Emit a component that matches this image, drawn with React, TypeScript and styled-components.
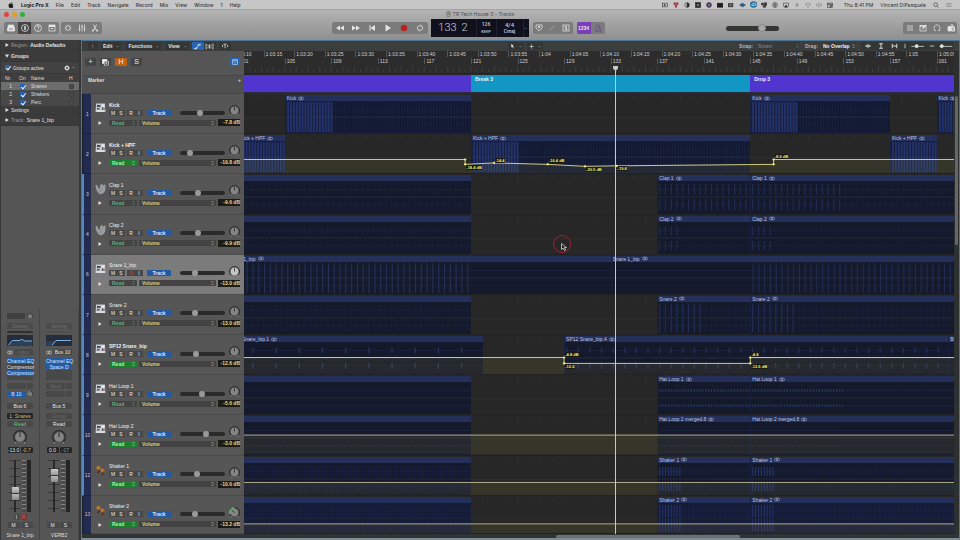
import React from 'react';
import styled, { createGlobalStyle } from 'styled-components';

const FIRST_BAR = 101.5;
const BARS = 61;
const pct = (bar: number) => ((bar - FIRST_BAR) / BARS) * 100;

const GlobalStyle = createGlobalStyle`
  * { box-sizing: border-box; }
  html, body { margin: 0; padding: 0; background: #2b2d2e; }
  body { font-family: "Liberation Sans", Arial, sans-serif; font-size: 5px; line-height: 6px; color: #dedede; overflow: hidden; }
  button, select, input { font: inherit; color: inherit; margin: 0; padding: 0; border: 0; }
  svg { display: block; }
`;

const Shell = styled.div`
  display: flex;
  flex-direction: column;
  height: 100vh;
`;

/* ---------- menu bar ---------- */

const MenuBar = styled.header`
  display: flex;
  align-items: center;
  justify-content: space-between;
  height: 9px;
  flex: none;
  padding: 0 8px;
  background: #c6c6c6;
  color: #303030;
  font-family: Inter, sans-serif;
`;
const MenuItems = styled.nav`
  display: flex;
  align-items: center;
  gap: 7px;
`;
const MenuItem = styled.a<{ $strong?: boolean }>`
  color: ${(p) => (p.$strong ? '#151515' : '#3a3a3a')};
  font-weight: ${(p) => (p.$strong ? 700 : 500)};
  text-decoration: none;
`;
const StatusItems = styled.div`
  display: flex;
  align-items: center;
  gap: 7px;
`;
const StatusIcons = styled.div`
  display: grid;
  grid-auto-flow: column;
  grid-auto-columns: 11px;
  justify-items: center;
  align-items: center;
  margin-right: 1px;
`;

/* ---------- window chrome ---------- */

const Chrome = styled.div`
  flex: none;
  background: linear-gradient(#b3b3b3, #8f8f8f);
  border-top: 1px solid #a2a2a2;
  height: 31px;
`;
const TitleBar = styled.div`
  display: grid;
  grid-template-columns: 1fr auto 1fr;
  align-items: center;
  height: 8px;
  padding: 0 4px;
  color: #4c4c4c;
  font-family: Inter, sans-serif;
`;
const Lights = styled.div`
  display: flex;
  gap: 3px;
`;
const Light = styled.button<{ $color: string }>`
  width: 5px;
  height: 5px;
  border-radius: 50%;
  background: ${(p) => p.$color};
`;
const Title = styled.h1`
  display: flex;
  align-items: center;
  gap: 2px;
  margin: 0;
  font-size: 5px;
  font-weight: 400;
`;
const Toolbar = styled.div`
  display: flex;
  align-items: center;
  height: 20px;
  padding: 0 3px 0 4px;
`;
const Spacer = styled.div<{ $grow: number }>`
  flex: ${(p) => p.$grow} 1 0;
`;
const Group = styled.div<{ $gap?: number }>`
  display: flex;
  height: 12px;
  border-radius: 2px;
  overflow: hidden;
  background: #7b7b7b;
  margin-right: ${(p) => p.$gap ?? 0}px;
`;
const ToolButton = styled.button<{ $w?: number; $bg?: string; $color?: string }>`
  display: flex;
  align-items: center;
  justify-content: center;
  width: ${(p) => p.$w ?? 13}px;
  height: 12px;
  background: ${(p) => p.$bg ?? 'transparent'};
  color: ${(p) => p.$color ?? '#e6e6e6'};
  font-weight: 700;
`;
const Lcd = styled.div`
  display: grid;
  grid-template-columns: 45px 20px 27px 6px;
  height: 18px;
  width: 98px;
  margin: 0 4px 0 3px;
  background: #10111d;
  color: #c4c9e0;
  font-family: Roboto, sans-serif;
  text-align: center;
`;
const LcdBig = styled.div`
  display: flex;
  justify-content: center;
  gap: 5px;
  font-size: 11px;
  font-weight: 300;
  line-height: 17px;
`;
const LcdCell = styled.div`
  display: flex;
  flex-direction: column;
  justify-content: center;
  border-left: 1px solid #202234;
`;
const LcdSmall = styled.span<{ $size: number }>`
  font-size: ${(p) => p.$size}px;
  line-height: 7px;
  font-weight: 500;
`;
const Volume = styled.input`
  appearance: none;
  width: 53px;
  height: 5px;
  border-radius: 3px;
  background: #353735;
  &::-webkit-slider-thumb {
    appearance: none;
    width: 8px;
    height: 8px;
    border-radius: 50%;
    background: #a8a8a8;
    border: 1px solid #8a8a8a;
  }
`;

/* ---------- body ---------- */

const Body = styled.main`
  display: flex;
  flex: 1;
  min-height: 0;
  background: #333739;
`;
const Inspector = styled.aside`
  display: flex;
  flex-direction: column;
  width: 80px;
  flex: none;
  padding: 0 1px;
  background: #363738;
`;
const InspectorRow = styled.div<{ $h?: number; $bg?: string }>`
  display: flex;
  align-items: center;
  gap: 2px;
  height: ${(p) => p.$h ?? 10}px;
  flex: none;
  padding: 0 4px;
  margin-bottom: 1px;
  background: ${(p) => p.$bg ?? '#3b3b3b'};
  color: #e2e2e2;
`;
const Muted = styled.span`
  color: #9b9b9b;
`;
const Push = styled.span`
  margin-left: auto;
`;
const Check = styled.input`
  appearance: none;
  position: relative;
  width: 5px;
  height: 5px;
  flex: none;
  display: block;
  border-radius: 1px;
  background: #4b4b4b;
  border: 1px solid #3e3e3e;
  &:checked {
    border: 0;
    background: #2862ad;
  }
  &:checked::after {
    content: '';
    position: absolute;
    left: 2px;
    top: 0;
    width: 2px;
    height: 4px;
    border-right: 1px solid #e6efff;
    border-bottom: 1px solid #e6efff;
    transform: rotate(40deg);
  }
`;
const GroupLabel = styled.label`
  display: flex;
  align-items: center;
  gap: 3px;
`;
const GroupTable = styled.table`
  border-collapse: collapse;
  table-layout: fixed;
  width: 100%;
  background: #484848;
  th { height: 8px; padding: 0; background: #3f3f3f; font-weight: 400; text-align: left; }
  td { height: 8px; padding: 0; }
  th:first-child { padding-left: 4px; width: 16px; }
  td:first-child { text-align: right; padding-right: 5px; }
  th:nth-child(2) { width: 14px; padding-left: 2px; }
  td:nth-child(2) { padding-left: 3px; }
  th:last-child, td:last-child { width: 10px; }
`;
const GroupTr = styled.tr<{ $on?: boolean }>`
  background: ${(p) => (p.$on ? '#6d6d6d' : 'transparent')};
`;
const InspectorFill = styled.div`
  flex: 1;
  background: #555;
`;
const Strips = styled.div`
  display: grid;
  grid-template-columns: 1fr 1fr;
  flex: none;
  background: #555;
`;
const StripBox = styled.section`
  display: grid;
  grid-template-rows: 11px 9px 3px 14px 10px 24px 18px 13px 8px 8px 18px 8px 59px 8px 8px 11px;
  align-items: center;
  justify-items: center;
  border-right: 1px solid #464646;
`;
const Slot = styled.button<{ $bg?: string; $fg?: string; $w?: number; $h?: number }>`
  display: block;
  width: ${(p) => p.$w ?? 26}px;
  height: ${(p) => p.$h ?? 6}px;
  line-height: 6px;
  border-radius: 1px;
  text-align: center;
  white-space: nowrap;
  background: ${(p) => p.$bg ?? '#484848'};
  color: ${(p) => p.$fg ?? '#e4e4e4'};
`;
const StripLine = styled.div<{ $gap?: number }>`
  display: flex;
  align-items: center;
  gap: ${(p) => p.$gap ?? 1}px;
`;
const Stack = styled.div<{ $h: number; $bg?: string }>`
  display: flex;
  flex-direction: column;
  gap: ${(p) => (p.$bg ? 0 : 2)}px;
  height: ${(p) => p.$h}px;
  background: ${(p) => p.$bg ?? 'transparent'};
`;
const FaderRow = styled.div`
  display: flex;
  align-items: center;
  align-self: end;
  gap: 1px;
  height: 54px;
`;
const Fader = styled.input`
  appearance: none;
  writing-mode: vertical-lr;
  direction: rtl;
  width: 12px;
  height: 52px;
  background: linear-gradient(90deg, transparent 5px, #292929 5px, #292929 7px, transparent 7px),
    repeating-linear-gradient(#3a3a3a 0 1px, transparent 1px 8px);
  &::-webkit-slider-thumb {
    appearance: none;
    width: 7px;
    height: 13px;
    border-radius: 1px;
    background: linear-gradient(#cfcfcf, #9a9a9a 45%, #333 46%, #333 52%, #b8b8b8 54%, #8a8a8a);
  }
`;
const Meter = styled.div`
  width: 4px;
  height: 52px;
  background: #262626;
`;
const Scale = styled.div`
  width: 4px;
  height: 52px;
  background: repeating-linear-gradient(#888 0 1px, #4a4a4a 1px 4px);
`;

/* ---------- arrange area ---------- */

const Arrange = styled.section`
  display: flex;
  flex-direction: column;
  flex: 1;
  min-width: 0;
  margin-left: 1px;
  border: 1px solid #4d7593;
  border-bottom: 2px solid #7c8d96;
  background: #313434;
`;
const ArrangeBar = styled.div`
  display: flex;
  align-items: center;
  height: 10px;
  flex: none;
  padding: 0 5px 0 6px;
  background: #3c3d3d;
`;
const BarMenu = styled.button<{ $mr?: number }>`
  display: flex;
  align-items: center;
  gap: 4px;
  padding: 0 2px;
  height: 8px;
  margin-right: ${(p) => p.$mr ?? 5}px;
  background: #343535;
  color: #e0e0e0;
  font-weight: 700;
`;
const BarIcon = styled.button<{ $on?: boolean; $w?: number }>`
  display: flex;
  align-items: center;
  justify-content: center;
  width: ${(p) => p.$w ?? 11}px;
  height: 8px;
  border-radius: 1px;
  background: ${(p) => (p.$on ? '#2766b6' : '#343535')};
  color: #e2e2e2;
`;
const BarField = styled.label<{ $dim?: boolean; $w: number }>`
  display: flex;
  align-items: center;
  gap: 5px;
  color: ${(p) => (p.$dim ? '#777' : '#c4c4c4')};
  font-weight: 700;
  margin-right: 5px;
  span { color: #b4b4b4; }
  select { appearance: none; width: ${(p) => p.$w}px; height: 8px; margin-right: -10px; background: #383939; color: ${(p) => (p.$dim ? '#777' : '#eee')}; }
`;
const Scroller = styled.div`
  display: flex;
  flex: 1;
  min-height: 0;
`;
const Board = styled.div`
  position: relative;
  display: grid;
  flex: 1;
  min-width: 0;
  overflow: hidden;
  grid-template-columns: 162px minmax(0, 1fr);
  grid-template-rows: 24px 19px repeat(10, minmax(0, 40fr)) minmax(0, 38fr);
`;
const BoardTools = styled.div`
  display: flex;
  align-items: center;
  gap: 4px;
  padding: 0 4px 2px 3px;
  background: #555;
`;
const SquareButton = styled.button<{ $bg?: string; $w?: number }>`
  display: flex;
  align-items: center;
  justify-content: center;
  width: ${(p) => p.$w ?? 11}px;
  height: 8px;
  border-radius: 1px;
  background: ${(p) => p.$bg ?? '#444'};
  color: #f0f0f0;
  font-size: 7px;
`;
const MarkerHead = styled.div`
  display: flex;
  justify-content: space-between;
  padding: 1px 3px 0 6px;
  background: #505050;
  border-bottom: 1px solid #454545;
  border-top: 1px solid #484848;
  font-weight: 700;
`;
const Ruler = styled.div`
  position: relative;
  overflow: hidden;
  background: #2c2c2c;
  border-bottom: 2px solid #262626;
`;
const RulerText = styled.span<{ $at: number; $top: number }>`
  position: absolute;
  left: ${(p) => p.$at}%;
  top: ${(p) => p.$top}px;
  padding-left: 1px;
  border-left: 1px solid #555;
  white-space: nowrap;
  color: #cfcfcf;
`;
const Fill = styled.svg`
  position: absolute;
  inset: 0;
  width: 100%;
  height: 100%;
`;
const MarkerLane = styled.div`
  display: grid;
  grid-template-columns: 195fr 240fr 175fr;
  background: #292a3a;
  padding-bottom: 2px;
`;
const MarkerBlock = styled.div<{ $bg: string }>`
  background: ${(p) => p.$bg};
  color: #f0f0f4;
  font-weight: 700;
  padding: 1px 4px;
`;

/* ---------- track header ---------- */

const TrackHead = styled.div<{ $selected?: boolean }>`
  display: grid;
  grid-template-columns: 9px 17px minmax(0, 1fr);
  min-height: 0;
  background: ${(p) => (p.$selected ? '#7b7b7b' : '#565656')};
  border-bottom: 1px solid #4b4b4b;
`;
const Num = styled.div<{ $lit: boolean }>`
  display: flex;
  align-items: center;
  justify-content: center;
  background: #232c50;
  border-left: 2px solid ${(p) => (p.$lit ? '#5487bd' : '#1c2438')};
  margin-bottom: -1px;
  border-bottom: 1px solid #1b2342;
  color: #c2c8dc;
`;
const IconCol = styled.div`
  display: flex;
  flex-direction: column;
  align-items: center;
  justify-content: space-between;
  height: 31px;
  padding: 9px 0 0 1px;
`;
const Fields = styled.div`
  display: grid;
  grid-template-rows: 7px 9px 11px;
  align-items: center;
  padding: 7px 4px 0 1px;
  align-content: start;
`;
const Name = styled.span<{ $bold?: boolean }>`
  color: #efefef;
  white-space: nowrap;
  font-weight: ${(p) => (p.$bold ? 700 : 400)};
`;
const Line = styled.div`
  display: flex;
  align-items: center;
`;
const Mini = styled.button<{ $mr?: number; $color?: string }>`
  width: 8px;
  height: 6px;
  line-height: 6px;
  margin-right: ${(p) => p.$mr ?? 0}px;
  background: #474747;
  color: ${(p) => p.$color ?? '#ececec'};
  text-align: center;
`;
const TrackButton = styled.button`
  width: 24px;
  height: 6px;
  line-height: 6px;
  margin: 0 9px 0 4px;
  border-radius: 1px;
  background: #2359a0;
  color: #d8e6ff;
  font-weight: 700;
  text-align: center;
`;
const HSlider = styled.input`
  appearance: none;
  width: 45px;
  height: 4px;
  border-radius: 2px;
  background: #2a2a2a;
  &::-webkit-slider-thumb {
    appearance: none;
    width: 6px;
    height: 6px;
    border-radius: 50%;
    background: #9a9a9a;
  }
`;
const KnobSpot = styled.div`
  width: 11px;
  height: 11px;
  margin: -5px 0 -1px auto;
`;
const Picker = styled.div<{ $w?: number; $tone: 'on' | 'off' | 'param' }>`
  position: relative;
  width: ${(p) => (p.$w ? `${p.$w}px` : 'auto')};
  flex: ${(p) => (p.$w ? 'none' : 1)};
  margin-right: 2px;
  color: ${(p) => (p.$tone === 'on' ? '#a8f0b0' : p.$tone === 'off' ? '#63a878' : '#d9cc86')};
  select {
    appearance: none;
    display: block;
    width: 100%;
    height: 6px;
    line-height: 6px;
    padding: 0 3px;
    border-radius: 1px;
    font-weight: 700;
    background: ${(p) => (p.$tone === 'on' ? '#1c8030' : '#434343')};
  }
  svg { position: absolute; right: 1px; top: 0; pointer-events: none; }
`;
const Db = styled.output`
  width: 22px;
  height: 7px;
  line-height: 7px;
  background: #1d1d18;
  color: #e2da90;
  font-weight: 700;
  text-align: right;
  white-space: nowrap;
`;

/* ---------- lanes ---------- */

const Lane = styled.div`
  position: relative;
  overflow: hidden;
  min-height: 0;
  background: #272727;
  border-bottom: 1px solid #212121;
`;
const RegionBox = styled.div<{ $from: number; $to: number; $body: string }>`
  position: absolute;
  top: 1px;
  bottom: 0;
  left: ${(p) => pct(p.$from)}%;
  width: ${(p) => pct(p.$to) - pct(p.$from)}%;
  display: flex;
  flex-direction: column;
  overflow: hidden;
  background: ${(p) => p.$body};
  border-left: 1px solid #1a2140;
`;
const RegionTitle = styled.div`
  display: flex;
  align-items: center;
  gap: 2px;
  height: 6px;
  flex: none;
  padding-left: 1px;
  background: #25305a;
  color: #bcc6e4;
  white-space: nowrap;
`;
const WaveSvg = styled.svg`
  flex: 1;
  min-height: 0;
  width: 100%;
`;
const PointLabel = styled.span<{ $at: number; $top: number }>`
  position: absolute;
  left: ${(p) => p.$at}%;
  top: ${(p) => p.$top}%;
  height: 5px;
  line-height: 5px;
  background: #1a1a14;
  color: #f4ec70;
  font-size: 4px;
  font-weight: 700;
  white-space: nowrap;
`;
const Overlay = styled.div`
  position: absolute;
  top: 0;
  bottom: 0;
  left: 162px;
  right: 0;
  pointer-events: none;
`;
const Playhead = styled.div`
  position: absolute;
  top: 15px;
  bottom: 0;
  left: ${pct(133.4)}%;
  width: 1px;
  background: #c8c8c8;
  svg { margin-left: -2px; }
`;
const Pointer = styled.div`
  position: absolute;
  left: ${pct(128)}%;
  top: 38%;
`;
const VScroll = styled.div`
  width: 5px;
  flex: none;
  padding: 45px 1px 0;
  background: #2d3030;
`;
const VThumb = styled.div`
  height: 34%;
  border-radius: 2px;
  background: #666;
`;
const HScroll = styled.div`
  display: grid;
  grid-template-columns: 474fr 184fr 219fr;
  align-items: center;
  height: 4px;
  flex: none;
`;
const HThumb = styled.div`
  grid-column: 2;
  height: 3px;
  border-radius: 2px;
  background: #6d7072;
`;

/* ---------- drawings ---------- */

const Draw = ({ w = 8, h = 8, box = '0 0 16 16', children }: { w?: number; h?: number; box?: string; children: React.ReactNode }) => (
  <svg width={w} height={h} viewBox={box} fill="none" stroke="currentColor" strokeWidth={1.5} aria-hidden="true">
    {children}
  </svg>
);
const Chev = () => <Draw w={3} h={3}><path d="M2 5l6 6 6-6" strokeWidth={3} opacity={0.6} /></Draw>;
const UpDown = () => <Draw w={5} h={6}><path d="M5 6l3-4 3 4M5 10l3 4 3-4" strokeWidth={1.8} /></Draw>;
const Tri = ({ down }: { down?: boolean }) => (
  <Draw w={4} h={4}><path d={down ? 'M0 2h16L8 15z' : 'M2 0v16L15 8z'} fill="currentColor" stroke="none" /></Draw>
);
const Stereo = () => (
  <Draw w={6} h={5} box="0 0 18 14"><circle cx="6" cy="7" r="4.5" /><circle cx="12" cy="7" r="4.5" /></Draw>
);
const Knob = ({ size = 11, lit, green }: { size?: number; lit?: boolean; green?: boolean }) => (
  <svg width={size} height={size} viewBox="0 0 22 22" aria-hidden="true">
    <path d="M5 19A10 10 0 1 1 17 19" fill="none" stroke="#2a2a2a" strokeWidth={2} />
    {green && <path d="M2 14A10 10 0 0 1 11 1.500" fill="none" stroke="#62c27c" strokeWidth={3} />}
    <circle cx="11" cy="11" r="7.500" fill={lit ? '#c4c4c4' : '#858585'} />
    <path d={green ? 'M11 11L5 6' : 'M11 11V4'} stroke="#262626" strokeWidth={1.5} />
    <circle cx="4" cy="20" r="1" fill="#aaa" /><circle cx="18" cy="20" r="1" fill="#aaa" />
  </svg>
);
const Apple = () => (
  <svg width={6} height={6} viewBox="0 0 16 16" aria-hidden="true">
    <path fill="#1c1c1c" d="M11 0c0 2-1.500 3.500-3 3.500C8 1.800 9.500.3 11 0zM8 4.600c1 0 1.700-.8 3-.8 1.200 0 2.300.6 3 1.600-2.600 1.600-2.100 5 .5 6C13.700 13.500 12.500 16 11 16c-1.100 0-1.500-.7-2.800-.7S6.500 16 5.400 16C3.500 16 1.500 12.300 1.500 9.200c0-3.200 2-5 3.900-5 1.100 0 1.900.4 2.600.4z" />
  </svg>
);
const DrumMachine = () => (
  <svg width={11} height={10} viewBox="0 0 22 20" aria-hidden="true">
    <path d="M2 1h18v4l1 13H1L2 5z" fill="#c3c7cc" /><rect x="4" y="4" width="7" height="4" fill="#3f5668" />
    <rect x="13" y="3" width="6" height="4" fill="#eceef0" /><path d="M4 10h5v3H4zM14 9h2v5h-2z" fill="#4a5056" />
    <path d="M17 9h2v5h-2z" fill="#8c4a44" /><path d="M3 15h16v2H3z" fill="#f2f2f2" />
  </svg>
);
const Clap = () => (
  <svg width={11} height={12} viewBox="0 0 22 24" aria-hidden="true">
    <path d="M1 6q0-3 3-2l4 8q2-1 2-5 0-5 4-5 2 1 2 4 4-5 5-1 1 9-3 14-4 5-9 3Q3 18 1 6z" fill="#9b9fa1" />
    <path d="M10 9q0 6-1 10M15 6q0 6-4 13" stroke="#7b8082" strokeWidth={1} fill="none" />
  </svg>
);
const Shaker = () => (
  <svg width={11} height={11} viewBox="0 0 22 22" aria-hidden="true">
    <circle cx="7" cy="6" r="4" fill="#c67a26" /><circle cx="15" cy="11" r="4" fill="#b5641a" />
    <path d="M9 9l-3 8M16 15l-1 6" stroke="#4a2c12" strokeWidth={2.5} /><circle cx="14" cy="10" r="1.500" fill="#e8a85a" />
  </svg>
);

const statusShapes: React.ReactNode[] = [
  <><rect x="1" y="3" width="14" height="10" /><path d="M6 6l4 2-4 2z" fill="currentColor" /></>,
  <><path d="M2 2l5 5M7 2L2 7M9 2l5 5M14 2L9 7M5 9l6 5M11 9l-6 5" stroke="#9b2530" strokeWidth={3} /></>,
  <><circle cx="8" cy="8" r="6" /><path d="M8 2a6 6 0 0 1 0 12z" fill="currentColor" /></>,
  <><rect x="1" y="1" width="14" height="14" fill="#2a2a2a" /><circle cx="8" cy="8" r="3" fill="#ccc" /></>,
  <><circle cx="8" cy="8" r="6.500" fill="#5a3a86" /><circle cx="8" cy="8" r="2.500" fill="#ddd" /></>,
  <rect x="0" y="3" width="16" height="11" fill="#1d1d1d" />,
  <><rect x="1" y="4" width="12" height="9" fill="currentColor" /><path d="M4 7h6M4 10h6" stroke="#ccc" /></>,
  <><path d="M0 8l8-5 8 5-8 5z" fill="#355c92" stroke="#355c92" strokeWidth={2} /></>,
  <><ellipse cx="8" cy="8" rx="8" ry="7.500" fill="#1c6f9c" stroke="none" /><path d="M4 10h8a2 2 0 0 0-1-4 3 3 0 0 0-5 1 2 2 0 0 0-2 3z" stroke="#fff" /></>,
  <path d="M1 3h6v5H1zM9 2h6v7H9zM6 10h6v4H6z" fill="currentColor" />,
  <><circle cx="8" cy="8" r="6.500" /><path d="M8 2v12M4 6l4 4 4-4" strokeWidth={2} /></>,
  <><path d="M3 11H1V3h14v8h-2" /><path d="M8 8l4 6H4z" fill="currentColor" /></>,
  <path d="M8 2v12M3 8h10" opacity={0.6} />,
  <path d="M1 6q7-6 14 0l-7 8z" opacity={0.6} />,
  <path d="M1 6h3l4-4v12l-4-4H1zM11 5q2 3 0 6M14 3q3 5 0 10" opacity={0.45} />,
  <><rect x="1" y="3" width="14" height="11" /><path d="M1 6h14M8 9h4v3H8z" strokeWidth={2} /></>,
];

/* ---------- data ---------- */

type WaveLayer = { from: number; to: number; step: number; w: number; amp: number; color: string };
type Region = { name?: string; from: number; to: number; body?: string; layers?: WaveLayer[] };
type Track = {
  n: number; name: string; icon: 'drum' | 'clap' | 'shaker'; vol: number; db: string; on?: boolean; bold?: boolean; selected?: boolean; green?: boolean;
  regions: Region[]; line?: [number, number][]; labels?: [number, number, string][]; nodes?: boolean;
};

const DARK = '#141a2b';
const BLUE = '#171e3a';
const END = 163;

const beats = (from: number, to: number, hot: number): WaveLayer[] => [
  { from, to: hot, step: 0.25, w: 0.16, amp: 16, color: '#23326a' },
  { from: hot, to, step: 0.25, w: 0.1, amp: 16, color: '#12182f' },
];
const hits = (from: number, to: number, step: number, amp: number, color: string): WaveLayer => ({ from, to, step, w: 0.1, amp, color });
const kick = (name: string, from: number, to: number, hot: number): Region => ({ name, from, to, body: BLUE, layers: beats(from, to, hot) });

const tail = (name: string, make: (a: number, b: number, first: boolean) => WaveLayer[], body = DARK): Region[] => [
  { from: 85, to: 121, body, layers: make(101, 121, true) },
  { name, from: 137, to: 145, body, layers: make(137, 145, false) },
  { name, from: 145, to: END, body, layers: make(145, END, false) },
];

const tracks: Track[] = [
  { n: 1, name: 'Kick', icon: 'drum', vol: 44, db: '-7.8 dB', bold: true, regions: [kick('Kick', 105, 121, 109), kick('Kick', 145, 157, 149), kick('Kick', 161, END, 163)] },
  {
    n: 2, name: 'Kick + HPF', icon: 'drum', vol: 19, db: '-19.8 dB', on: true, bold: true, nodes: true,
    regions: [kick('Kick + HPF', 101, 105, 105), kick('Kick + HPF', 121, 145, 125), kick('Kick + HPF', 157, 161, 161)],
    line: [[101, 26], [120.5, 26], [120.5, 31], [123, 29.5], [127.6, 31], [130.8, 33], [133.5, 32.5], [147, 31], [147, 26], [163, 26]],
    labels: [[120.6, 78, '-18.4 dB'], [123.1, 60, '-14.4'], [127.7, 62, '-16.4 dB'], [130.9, 84, '-20.5 dB'], [133.6, 82, '-19.8'], [147.1, 50, '-8.0 dB']],
  },
  { n: 3, name: 'Clap 1', icon: 'clap', vol: 39, db: '-9.6 dB', regions: tail('Clap 1', (a, b, f) => f ? [hits(a, b, 0.5, 10, '#192036')] : [hits(a, b, 0.5, 10, '#191f3a'), hits(a, Math.min(b, a + 8), 0.5, 12, '#212b50')]) },
  { n: 4, name: 'Clap 2', icon: 'clap', vol: 38, db: '-9.9 dB', regions: tail('Clap 2', (a, b, f) => f ? [hits(a, b, 0.5, 8, '#191f34')] : [hits(a, b, 0.5, 9, '#181e32'), hits(a, a + 2, 0.5, 10, '#222c50')]) },
  {
    n: 6, name: 'Snare 1_bip', icon: 'drum', vol: 32, db: '-13.0 dB', selected: true,
    regions: [
      { name: 'Snare 1_bip', from: 100, to: 133, body: DARK, layers: [hits(101, 121, 0.5, 16, '#242f56')] },
      { name: 'Snare 1_bip', from: 133, to: END, body: DARK, layers: [hits(145, END, 0.5, 16, '#202a50')] },
    ],
  },
  { n: 7, name: 'Snare 2', icon: 'drum', vol: 32, db: '-13.0 dB', regions: tail('Snare 2', (a, b, f) => f ? [hits(a, b, 0.5, 12, '#181f38')] : [hits(a, b, 0.5, 14, '#181f38'), hits(a, a + 4, 0.5, 15, '#222d56')]) },
  {
    n: 8, name: 'SP12 Snare_bip', icon: 'drum', vol: 33, db: '-12.6 dB', on: true, bold: true, nodes: true,
    regions: [
      { name: 'SP12 Snare_bip.1', from: 100, to: 122, body: DARK, layers: [hits(102, 122, 2, 6, '#2b3760')] },
      { name: 'SP12 Snare_bip.4', from: 129, to: 162, body: DARK, layers: [hits(129, 162, 1, 6, '#26315a')] },
      { name: 'Bip', from: 162, to: END },
    ],
    line: [[101, 23], [129, 23], [129, 29], [145, 29], [145, 23], [163, 23]],
    labels: [[129.1, 42, '-4.8 dB'], [129.1, 74, '-12.6'], [145.1, 42, '-4.8'], [145.1, 74, '-12.6 dB']],
  },
  { n: 9, name: 'Hat Loop 1', icon: 'drum', vol: 49, db: '-5.6 dB', regions: tail('Hat Loop 1', (a, b, f) => f ? [hits(a, b, 0.25, 4, '#191f38')] : [hits(a, b, 0.25, 2, '#1a2240'), hits(a, a + 8, 0.25, 3, '#26335a')]) },
  { n: 10, name: 'Hat Loop 2', icon: 'drum', vol: 60, db: '-3.0 dB', on: true, regions: tail('Hat Loop 2 merged.8', (a, b, f) => [hits(a, f ? b : a + 8, 0.5, 1, '#202a49')]), line: [[101, 20.5], [163, 20.5]] },
  { n: 12, name: 'Shaker 1', icon: 'shaker', vol: 37, db: '-10.6 dB', on: true, regions: tail('Shaker 1', (a, b, f) => f ? [hits(a, b, 0.25, 12, '#181f44')] : [hits(a, b, 0.25, 10, '#181f3c'), hits(a, a + 2, 0.25, 9, '#26346a')]), line: [[101, 27], [163, 27]] },
  { n: 13, name: 'Shaker 2', icon: 'shaker', vol: 31, db: '-13.2 dB', on: true, green: true, regions: tail('Shaker 2', (a, b, f) => f ? [hits(a, b, 0.25, 15, '#192044')] : [hits(a, b, 0.25, 14, '#192044'), hits(a, a + 2, 0.25, 14, '#243164')], '#151b34'), line: [[101, 30], [163, 30]] },
];

/* ---------- pieces ---------- */

const Wave = ({ region }: { region: Region }) => {
  const span = region.to - region.from;
  return (
    <WaveSvg viewBox={`0 0 ${span} 34`} preserveAspectRatio="none" aria-hidden="true">
      <path d={`M0 9H${span}M0 25H${span}`} stroke="#222c4e" strokeWidth={1} opacity={0.45} />
      {(region.layers ?? []).map((l, i) => {
        let d = '';
        for (let b = l.from + 0.1; b < l.to; b += l.step) {
          const x = b - region.from;
          const a = Math.min(l.amp, 16) / 2;
          d += `M${x} ${9 - a}h${l.w}v${a * 2}h-${l.w}zM${x} ${25 - a}h${l.w}v${a * 2}h-${l.w}z`;
        }
        return <path key={i} d={d} fill={l.color} />;
      })}
      <path d={`M0 17H${span}`} stroke="#313a50" strokeWidth={1} opacity={0.5} />
    </WaveSvg>
  );
};

const LaneTicks = () => {
  let d = '';
  for (let b = 102; b < 163; b += 1) d += `M${b - FIRST_BAR} 2V7`;
  return (
    <Fill viewBox={`0 0 ${BARS} 40`} preserveAspectRatio="none" aria-hidden="true">
      <path d={d} stroke="#343434" strokeWidth={0.08} />
      <path d={`M0 24H${BARS}`} stroke="#2d2d2d" strokeWidth={1} />
    </Fill>
  );
};

const Automation = ({ line, nodes }: { line: [number, number][]; nodes?: boolean }) => {
  const pts = line.map(([b, y]) => `${(b - FIRST_BAR) * 10},${y}`);
  return (
    <Fill viewBox={`0 0 ${BARS * 10} 40`} preserveAspectRatio="none" aria-hidden="true">
      <polygon points={`0,40 ${pts.join(' ')} ${BARS * 10},40`} fill="#d8c850" opacity={0.09} />
      <polyline points={pts.join(' ')} fill="none" stroke={nodes ? '#d0ca80' : '#b0ae90'} strokeWidth={1} vectorEffect="non-scaling-stroke" />
      {nodes && line.slice(1, -1).map(([b, y]) => <circle key={`${b}-${y}`} cx={(b - FIRST_BAR) * 10} cy={y} r={1.1} fill="#f6ee84" />)}
    </Fill>
  );
};

const TrackRow = ({ t, lit }: { t: Track; lit: boolean }) => (
  <>
    <TrackHead $selected={t.selected}>
      <Num $lit={lit}>{t.n}</Num>
      <IconCol>
        {t.icon === 'drum' ? <DrumMachine /> : t.icon === 'clap' ? <Clap /> : <Shaker />}
        <Tri />
      </IconCol>
      <Fields>
        <Name $bold={t.bold}>{t.name}</Name>
        <Line>
          <Mini>M</Mini><Mini $mr={2}>S</Mini><Mini $color={t.selected ? '#c23a3a' : undefined}>R</Mini><Mini>I</Mini>
          <TrackButton>Track</TrackButton>
          <HSlider type="range" aria-label={`${t.name} level`} defaultValue={t.vol} />
          <KnobSpot><Knob lit={t.selected} green={t.green} /></KnobSpot>
        </Line>
        <Line>
          <Picker $w={28} $tone={t.on ? 'on' : 'off'}>
            <select aria-label={`${t.name} automation mode`}><option>Read</option></select><UpDown />
          </Picker>
          <Picker $tone="param">
            <select aria-label={`${t.name} automation parameter`}><option>Volume</option></select><UpDown />
          </Picker>
          <Db>{t.db}</Db>
        </Line>
      </Fields>
    </TrackHead>
    <Lane>
      <LaneTicks />
      {t.regions.map((r) => (
        <RegionBox key={r.from} $from={r.from} $to={r.to} $body={r.body ?? DARK}>
          <RegionTitle>{r.name && <>{r.name} <Stereo /></>}</RegionTitle>
          <Wave region={r} />
        </RegionBox>
      ))}
      {t.line && <Automation line={t.line} nodes={t.nodes} />}
      {(t.labels ?? []).map(([b, y, text]) => <PointLabel key={`${b}${text}`} $at={pct(b)} $top={y}>{text}</PointLabel>)}
    </Lane>
  </>
);

type StripProps = { first?: boolean; input: string; inserts: [string, boolean][]; send?: string; out: string; group?: string; peak: [string, string]; level: number; name: string };
const Strip = ({ first, input, inserts, send, out, group, peak, level, name }: StripProps) => (
  <StripBox>
    {first ? <StripLine $gap={2}><Slot $w={18} $bg="#3f3f3f" aria-label="Gain" /><Knob size={6} /></StripLine> : <span />}
    <Slot $bg="#4b4b4b" $fg="#6f6f6f">Setting</Slot>
    <Slot $h={2} $bg={first ? '#303030' : '#505050'} aria-label="Gain reduction" />
    <svg width={26} height={11} viewBox="0 0 52 22" role="img" aria-label="Equalizer curve">
      <rect width="52" height="22" fill="#262d3a" />
      <path d={first ? 'M3 20L10 12H50V22H3z' : 'M0 12H20L14 22H0z'} fill="#2d4668" opacity={0.7} />
      <path d={first ? 'M3 20L11 11H24L30 9L36 12H50' : 'M12 20L20 11H50'} fill="none" stroke="#83b3dc" strokeWidth={2} />
    </svg>
    <StripLine><Stereo /><Slot $w={19} $fg={first ? '#6f6f6f' : '#e4e4e4'}>{input}</Slot></StripLine>
    <Stack $h={22} $bg="#484848">
      {inserts.map(([label, on], i) => <Slot key={i} $bg={on ? '#225ba6' : '#404040'} $fg={on ? '#d6e6ff' : '#e4e4e4'}>{label}</Slot>)}
    </Stack>
    <Stack $h={14}>
      <StripLine><Slot $w={19} $fg="#6c6c6c">{first ? '' : 'Send'}</Slot><Slot $w={6} aria-label="Send level" /></StripLine>
      <StripLine>
        <Slot $w={19} $bg={send ? '#225ba6' : '#484848'}>{send}</Slot>
        {send ? <Knob size={6} green /> : <Slot $w={6} aria-label="Send level" />}
      </StripLine>
    </Stack>
    <Slot>{out}</Slot>
    <Slot $bg={group ? '#262626' : '#484848'} $fg={group ? '#d2ba72' : '#686868'}>{group ?? 'Group'}</Slot>
    <Slot $fg={first ? '#65c47c' : '#e4e4e4'}>Read</Slot>
    <Knob size={14} />
    <StripLine><Slot $w={12} $bg="#262626">{peak[0]}</Slot><Slot $w={12} $bg="#262626" $fg={first ? '#d2ba72' : '#8d948d'}>{peak[1]}</Slot></StripLine>
    <FaderRow><Fader type="range" aria-label={`${name} fader`} defaultValue={level} /><Scale /><Meter /></FaderRow>
    {first ? <StripLine><Slot $w={6}>I</Slot><Slot $w={6} $bg="#7a3434" $fg="#e05a5a">R</Slot></StripLine> : <span />}
    <StripLine><Slot $w={12}>M</Slot><Slot $w={12}>S</Slot></StripLine>
    <span>{name}</span>
  </StripBox>
);

const times: string[] = [];
for (let i = 0; i < 24; i += 1) {
  const s = 10 + i * 5;
  const sec = s % 60;
  times.push(`1:0${3 + Math.floor(s / 60)}${sec ? `:${String(sec).padStart(2, '0')}` : ''}`);
}
const barNumbers = Array.from({ length: 16 }, (_, i) => 101 + i * 4);

const rulerTicks = () => {
  let d = '';
  for (let b = 102; b < 163; b += 0.5) {
    const x = b - FIRST_BAR;
    d += `M${x} ${b % 1 ? 18 : 15}V21`;
  }
  return d;
};

export default function App() {
  return (
    <Shell>
      <GlobalStyle />
      <MenuBar>
        <MenuItems>
          <Apple />
          <MenuItem href="#" $strong>Logic Pro X</MenuItem>
          {['File', 'Edit', 'Track', 'Navigate', 'Record', 'Mix', 'View', 'Window', '1', 'Help'].map((m) => <MenuItem key={m} href="#">{m}</MenuItem>)}
        </MenuItems>
        <StatusItems>
          <StatusIcons>{statusShapes.map((s, i) => <Draw key={i} w={i === 8 || i === 7 ? 9 : 6} h={i === 8 ? 7 : 6}>{s}</Draw>)}</StatusIcons>
          <span>Thu 8:41 PM</span>
          <span>Vincent DiPasquale</span>
          <Draw w={6} h={6}><circle cx="7" cy="7" r="5" /><path d="M11 11l4 4" /></Draw>
          <Draw w={6} h={6}><path d="M1 4h14M1 8h14M1 12h14" opacity={0.5} /></Draw>
        </StatusItems>
      </MenuBar>

      <Chrome>
        <TitleBar>
          <Lights>
            <Light $color="#e0443e" aria-label="Close" /><Light $color="#dea02c" aria-label="Minimize" /><Light $color="#2fae3c" aria-label="Zoom" />
          </Lights>
          <Title><Draw w={5} h={6}><rect x="3" y="1" width="10" height="14" /><path d="M5 5h6M5 9h6" strokeWidth={2} /></Draw>TR Tech House 3 - Tracks</Title>
        </TitleBar>
        <Toolbar>
          <Group $gap={2}>
            <ToolButton $w={14} aria-label="Library"><Draw><path d="M3 2h10l2 8v4H1v-4z" fill="currentColor" /><path d="M4 10h8" stroke="#666" /></Draw></ToolButton>
            <ToolButton $w={13} $bg="#454545" aria-label="Inspector"><Draw><circle cx="8" cy="8" r="7" /><path d="M8 4v8" strokeWidth={3} /></Draw></ToolButton>
            <ToolButton $w={14} aria-label="Quick help"><Draw><circle cx="8" cy="8" r="7" /><path d="M5.500 6q0-3 2.500-3t2.500 3q0 1-2.500 2.500V10M8 11.500v1.500" /></Draw></ToolButton>
            <ToolButton $w={14} aria-label="Toolbar"><Draw><rect x="2" y="2" width="12" height="12" /><path d="M2 4h12" strokeWidth={4} /><path d="M6 9h4" strokeWidth={2} /></Draw></ToolButton>
          </Group>
          <Group>
            <ToolButton $w={14} aria-label="Smart controls"><Draw><circle cx="8" cy="8" r="4.500" /><path d="M3 13l2-2M13 13l-2-2M1 8h2M13 8h2M8 1v2M3 3l2 2M13 3l-2 2" /></Draw></ToolButton>
            <ToolButton $w={13} aria-label="Mixer"><Draw><path d="M3 1v14M8 1v14M13 1v14M1 10h4M6 5h4M11 10h4" strokeWidth={1.5} /></Draw></ToolButton>
            <ToolButton $w={14} aria-label="Editors"><Draw><path d="M5 1l5 11M11 1L6 12" /><path d="M5 11l-2 4M11 11l2 4" strokeWidth={3} /></Draw></ToolButton>
          </Group>
          <Spacer $grow={230} />
          <Group>
            <ToolButton $w={16} aria-label="Rewind"><Draw><path d="M8 3v10L0 8zM16 3v10L8 8z" fill="currentColor" stroke="none" /></Draw></ToolButton>
            <ToolButton $w={16} aria-label="Forward"><Draw><path d="M0 3v10l8-5zM8 3v10l8-5z" fill="currentColor" stroke="none" /></Draw></ToolButton>
            <ToolButton $w={16} aria-label="Go to beginning"><Draw><path d="M14 2v12L5 8zM3 2h2v12H3z" fill="currentColor" stroke="none" /></Draw></ToolButton>
            <ToolButton $w={16} aria-label="Play"><Draw><path d="M3 1v14l11-7z" fill="currentColor" stroke="none" /></Draw></ToolButton>
            <ToolButton $w={16} aria-label="Record"><Draw><circle cx="8" cy="8" r="6.500" fill="#b8221f" stroke="none" /></Draw></ToolButton>
            <ToolButton $w={16} aria-label="Cycle"><Draw><path d="M4 12a5.500 5.500 0 0 1 1-8h6l-2-3M12 4a5.500 5.500 0 0 1-1 8H5l2 3" /></Draw></ToolButton>
          </Group>
          <Lcd>
            <LcdBig><span>133</span><span>2</span></LcdBig>
            <LcdCell><LcdSmall $size={5}>126</LcdSmall><LcdSmall $size={4}>KEEP</LcdSmall></LcdCell>
            <LcdCell><LcdSmall $size={6}>4/4</LcdSmall><LcdSmall $size={5}>Cmaj</LcdSmall></LcdCell>
            <LcdCell><Chev /></LcdCell>
          </Lcd>
          <Group $gap={4}>
            <ToolButton aria-label="Replace"><Draw><path d="M2 2h12v6l-6 6-6-6z" /><circle cx="8" cy="6" r="1.500" fill="currentColor" /></Draw></ToolButton>
            <ToolButton aria-label="Tuner"><Draw><path d="M3 13L13 3" opacity={0.5} /></Draw></ToolButton>
            <ToolButton $w={14} aria-label="Solo"><Draw><rect x="2" y="2" width="12" height="12" /><path d="M10 5H6v3h4v3H6" /></Draw></ToolButton>
          </Group>
          <Group>
            <ToolButton $w={14} $bg="#7a3fb8">1234</ToolButton>
            <ToolButton $w={14} $color="#6a4a94" aria-label="Metronome"><Draw><path d="M6 2h4l4 12H2zM8 11l4-7" /></Draw></ToolButton>
          </Group>
          <Spacer $grow={122} />
          <Volume type="range" aria-label="Master volume" defaultValue={71} />
          <Spacer $grow={124} />
          <Group>
            <ToolButton aria-label="List editors"><Draw><path d="M2 4h12M2 8h12M2 12h12" /></Draw></ToolButton>
            <ToolButton $w={14} aria-label="Note pads"><Draw><rect x="2" y="3" width="12" height="11" /><path d="M2 4h12M7 10l7-8" strokeWidth={2.5} /></Draw></ToolButton>
            <ToolButton $w={14} aria-label="Loop browser"><Draw><path d="M5 13H2M11 13h3M5 13a6 6 0 1 1 6 0" /></Draw></ToolButton>
            <ToolButton aria-label="Browsers"><Draw><path d="M2 5h7v9H2z" fill="currentColor" /><path d="M7 2h5v12M10 6h5v8h-5" strokeWidth={2} /></Draw></ToolButton>
          </Group>
        </Toolbar>
      </Chrome>

      <Body>
        <Inspector>
          <InspectorRow><Tri /><Muted>Region:</Muted><b>Audio Defaults</b></InspectorRow>
          <InspectorRow><Tri down /><b>Groups</b></InspectorRow>
          <InspectorRow $h={11} $bg="#424242">
            <GroupLabel><Check type="checkbox" defaultChecked />Groups active</GroupLabel>
            <Push><Draw w={6} h={6}><circle cx="8" cy="8" r="4" strokeWidth={3} /><path d="M8 0v4M8 12v4M0 8h4M12 8h4M3 3l2 2M11 11l2 2M3 13l2-2M11 5l2-2" strokeWidth={2} /></Draw></Push><Chev />
          </InspectorRow>
          <GroupTable>
            <thead><tr><th>Nr.</th><th>On</th><th>Name</th><th>H</th></tr></thead>
            <tbody>
              {['Snares', 'Shakers', 'Perc'].map((g, i) => (
                <GroupTr key={g} $on={i === 0}>
                  <td>{i + 1}</td>
                  <td><Check type="checkbox" defaultChecked aria-label={`${g} on`} /></td>
                  <td>{g}</td>
                  <td><Check type="checkbox" aria-label={`Hide ${g}`} /></td>
                </GroupTr>
              ))}
            </tbody>
          </GroupTable>
          <InspectorRow $h={8}><Tri />Settings</InspectorRow>
          <InspectorRow><Tri /><Muted>Track:</Muted>Snare 1_bip</InspectorRow>
          <InspectorFill />
          <Strips>
            <Strip first input="Input" inserts={[['Channel EQ', true], ['Compressor', false], ['Compressor', true]]} send="B 10" out="Bus 6" group="1: Snares" peak={['-13.0', '-0.7']} level={30} name="Snare 1_bip" />
            <Strip input="Bus 10" inserts={[['Channel EQ', true], ['Space D', true]]} out="Bus 5" peak={['0.0', '-17']} level={76} name="VERB2" />
          </Strips>
        </Inspector>

        <Arrange>
          <ArrangeBar>
            <BarIcon $w={10} aria-label="Back"><Draw w={5} h={5}><path d="M5 2v8q0 4 5 4M2 5l3-3 3 3" stroke="#8b6a66" strokeWidth={2} /></Draw></BarIcon>
            <Spacer $grow={3} />
            <BarMenu>Edit <Chev /></BarMenu><BarMenu>Functions <Chev /></BarMenu><BarMenu $mr={3}>View <Chev /></BarMenu>
            <BarIcon $on $w={12} aria-label="Show automation"><Draw w={9} h={7}><path d="M0 13h5l6-9h5" strokeWidth={2} /><circle cx="5" cy="12" r="1.500" /><circle cx="11" cy="4" r="1.500" /></Draw></BarIcon>
            <BarIcon $w={12} aria-label="Flex"><Draw w={9} h={7} box="0 0 18 14"><path d="M2 1v12M16 1v12M4 3l4 4-4 4M14 3l-4 4 4 4M9 2v10" /></Draw></BarIcon>
            <Spacer $grow={3} />
            <BarIcon $w={12} aria-label="Catch playhead"><Draw w={8} h={6}><path d="M4 3h8M8 3v11M3 5L0 8l3 3M13 5l3 3-3 3" strokeWidth={2} /></Draw></BarIcon>
            <Spacer $grow={282} />
            <BarMenu $mr={3}><Draw w={5} h={6}><path d="M4 1v12l3-3 3 5 2-1-3-5h4z" fill="currentColor" stroke="none" /></Draw><Chev /></BarMenu>
            <BarMenu><Draw w={5} h={5}><path d="M8 1v14M1 8h14" strokeWidth={2} /></Draw><Chev /></BarMenu>
            <Spacer $grow={194} />
            <BarField $dim $w={42}><span>Snap:</span><select><option>Smart</option></select><UpDown /></BarField>
            <BarField $w={33}><span>Drag:</span><select><option>No Overlap</option></select><UpDown /></BarField>
            <BarIcon $w={13} aria-label="Waveform zoom"><Draw w={8} h={6}><path d="M0 8h16M5 5v6M8 2v12M11 5v6" strokeWidth={2} /></Draw></BarIcon>
            <BarIcon $w={14} aria-label="Vertical auto zoom"><Draw w={6} h={6}><path d="M3 2h10M3 14h10M8 2v12" strokeWidth={2.5} /></Draw></BarIcon>
            <BarIcon $w={12} aria-label="Horizontal auto zoom"><Draw w={7} h={6}><path d="M2 2v12M14 2v12M2 8h12" strokeWidth={2.5} /></Draw></BarIcon>
            <BarIcon $w={28} aria-label="Vertical zoom"><Draw w={22} h={6} box="0 0 58 16"><path d="M5 2v12M22 9h34" strokeWidth={2} /><circle cx="36" cy="8" r="5" fill="currentColor" stroke="none" /></Draw></BarIcon>
            <BarIcon $w={26} aria-label="Horizontal zoom"><Draw w={24} h={6} box="0 0 64 16"><path d="M2 8h12M28 9h34" strokeWidth={2} /><circle cx="34" cy="8" r="5" fill="currentColor" stroke="none" /></Draw></BarIcon>
          </ArrangeBar>
          <Scroller>
            <Board>
              <BoardTools>
                <SquareButton>+</SquareButton>
                <SquareButton aria-label="Duplicate track"><Draw w={7} h={7}><rect x="1" y="1" width="10" height="9" fill="currentColor" /><rect x="5" y="5" width="10" height="9" fill="#444" /><path d="M10 7v5M7.500 9.500h5" /></Draw></SquareButton>
                <SquareButton $bg="#c1600e" $w={12}>H</SquareButton>
                <SquareButton>S</SquareButton>
                <Push><SquareButton $bg="#2464b2" aria-label="Track header options"><Draw w={6} h={6}><rect x="2" y="2" width="12" height="12" /><path d="M2 5h12M6 10h4" /></Draw></SquareButton></Push>
              </BoardTools>
              <Ruler>
                <Fill viewBox={`0 0 ${BARS} 22`} preserveAspectRatio="none" aria-hidden="true">
                  <path d={rulerTicks()} stroke="#555" strokeWidth={0.07} />
                </Fill>
                {times.map((t, i) => <RulerText key={t} $at={pct(100.55 + i * 2.63)} $top={0}>{t}</RulerText>)}
                {barNumbers.map((b) => <RulerText key={b} $at={pct(b)} $top={7}>{b}</RulerText>)}
              </Ruler>
              <MarkerHead><span>Marker</span><span>+</span></MarkerHead>
              <MarkerLane>
                <MarkerBlock $bg="#5036cf" /><MarkerBlock $bg="#1297c5">Break 3</MarkerBlock><MarkerBlock $bg="#5036cf">Drop 3</MarkerBlock>
              </MarkerLane>
              {tracks.map((t) => <TrackRow key={t.n} t={t} lit={t.n > 2 && t.n < 13} />)}
              <Overlay>
                <Playhead><svg width={5} height={5} viewBox="0 0 10 10" aria-hidden="true"><path d="M0 0h10v5L5 10 0 5z" fill="#c8c8c8" /></svg></Playhead>
                <Pointer>
                  <svg width={20} height={20} viewBox="0 0 40 40" aria-hidden="true">
                    <circle cx="20" cy="18" r="17" fill="none" stroke="#9f1f2b" strokeWidth={2} />
                    <path d="M19 17v12l3-3 3 5 2-1-2-5h4z" fill="#222" stroke="#ddd" strokeWidth={1.5} />
                  </svg>
                </Pointer>
              </Overlay>
            </Board>
            <VScroll><VThumb /></VScroll>
          </Scroller>
          <HScroll><HThumb /></HScroll>
        </Arrange>
      </Body>
    </Shell>
  );
}
